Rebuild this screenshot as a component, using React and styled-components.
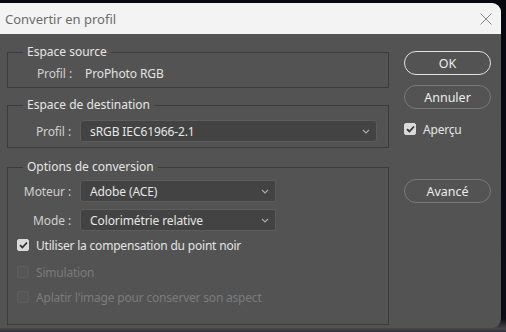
import React from "react";
import styled, { createGlobalStyle } from "styled-components";

const Global = createGlobalStyle`
  html, body { margin: 0; padding: 0; background: #0b0d13; }
  body { font-family: "Noto Sans", "Open Sans", sans-serif; font-size: 12px; }
  * { box-sizing: border-box; }
`;

const Page = styled.div`
  width: 506px;
  height: 332px;
  overflow: hidden;
  padding-top: 3px;
  background: linear-gradient(180deg, #07080d 0%, #0b0d14 96%, #4a4646 99%, #2a3040 100%);
`;

const Dialog = styled.div`
  width: 501px;
  height: 325px;
  border-radius: 0 9px 9px 0;
  overflow: hidden;
  background: #535353;
  display: flex;
  flex-direction: column;
`;

const TitleBar = styled.div`
  height: 31px;
  flex: none;
  background: #f3f3f3;
  display: flex;
  align-items: center;
  justify-content: space-between;
  padding: 0 9px 0 5px;
  color: #6c6c6c;
  font-size: 13px;
`;

const Body = styled.div`
  flex: 1;
  display: flex;
  padding: 10px 0 0 7px;
`;

const LeftCol = styled.div`
  width: 382px;
  display: flex;
  flex-direction: column;
`;

const Group = styled.fieldset`
  margin: ${p => p.$mt || 0}px 0 0 0;
  border: 1px solid #3b3b3b;
  padding: ${p => p.$pt}px 0 ${p => p.$pb}px 0;
  min-width: 0;
  display: flex;
  flex-direction: column;
  gap: ${p => p.$gap || 0}px;
`;

const Legend = styled.legend`
  margin-left: 15px;
  padding: 0 4px;
  line-height: 16px;
  font-size: 12px;
  color: #e6e6e6;
`;

const Row = styled.div`
  display: flex;
  align-items: center;
  height: ${p => p.$h || 22}px;
  letter-spacing: -0.1px;
`;

const Label = styled.span`
  width: ${p => p.$w}px;
  text-align: right;
  padding-right: 9px;
  color: #d0d0d0;
  flex: none;
`;

const Value = styled.span`
  color: #e2e2e2;
  padding-left: 4px;
`;

const Select = styled.div`
  width: ${p => p.$w}px;
  height: 22px;
  background: #434343;
  border: 1px solid #5c5c5c;
  border-radius: 3px;
  display: flex;
  align-items: center;
  justify-content: space-between;
  padding: 0 6px 0 9px;
  color: #e6e6e6;
`;

const Check = styled.span`
  width: 12px;
  height: 12px;
  border-radius: 2px;
  flex: none;
  display: flex;
  align-items: center;
  justify-content: center;
  background: ${p => (p.$on ? "#dadada" : p.$disabled ? "#565656" : "transparent")};
  border: 1px solid ${p => (p.$on ? "#dadada" : p.$disabled ? "#5e5e5e" : "#888")};
`;

const CheckRow = styled.label`
  display: flex;
  align-items: center;
  gap: 7px;
  height: ${p => p.$h || 16}px;
  margin-top: ${p => p.$mt || 0}px;
  padding-left: ${p => p.$pl || 0}px;
  letter-spacing: -0.2px;
  color: ${p => (p.$disabled ? "#7b7b7b" : "#e4e4e4")};
`;

const RightCol = styled.div`
  width: 87px;
  margin-left: 15px;
  display: flex;
  flex-direction: column;
  padding-top: 7px;
`;

const Button = styled.button`
  height: 24px;
  width: 87px;
  margin-top: ${p => p.$mt || 0}px;
  border-radius: 12px;
  background: transparent;
  border: ${p => (p.$primary ? "1.5px solid #e2e2e2" : "1px solid #7a7a7a")};
  color: #ececec;
  font-family: inherit;
  font-size: 12.5px;
  padding: 0;
`;

const Chevron = () => (
  <svg width="8" height="5" viewBox="0 0 8 5">
    <path d="M1 1 L4 4 L7 1" fill="none" stroke="#a9a9a9" strokeWidth="1.1" />
  </svg>
);

const Tick = () => (
  <svg width="9" height="8" viewBox="0 0 9 8">
    <path d="M1 4.2 L3.4 6.5 L8 1.5" fill="none" stroke="#333" strokeWidth="1.8" />
  </svg>
);

const Close = () => (
  <svg width="12" height="12" viewBox="0 0 12 12">
    <path d="M0.5 0.5 L11.5 11.5 M11.5 0.5 L0.5 11.5" stroke="#8a8a8a" strokeWidth="1" />
  </svg>
);

export default function App() {
  return (
    <>
      <Global />
      <Page>
        <Dialog>
          <TitleBar>
            <span>Convertir en profil</span>
            <Close />
          </TitleBar>
          <Body>
            <LeftCol>
              <Group $pt={5} $pb={6}>
                <Legend>Espace source</Legend>
                <Row $h={16}>
                  <Label $w={73}>Profil :</Label>
                  <Value>ProPhoto RGB</Value>
                </Row>
              </Group>
              <Group $mt={9} $pt={7} $pb={5}>
                <Legend>Espace de destination</Legend>
                <Row>
                  <Label $w={72}>Profil :</Label>
                  <Select $w={297}>
                    <span>sRGB IEC61966-2.1</span>
                    <Chevron />
                  </Select>
                </Row>
              </Group>
              <Group $mt={11} $pt={5} $pb={20} $gap={7}>
                <Legend>Options de conversion</Legend>
                <Row>
                  <Label $w={72}>Moteur :</Label>
                  <Select $w={196}>
                    <span>Adobe (ACE)</span>
                    <Chevron />
                  </Select>
                </Row>
                <Row>
                  <Label $w={72}>Mode :</Label>
                  <Select $w={196}>
                    <span>Colorimétrie relative</span>
                    <Chevron />
                  </Select>
                </Row>
                <CheckRow $pl={9} $h={14}>
                  <Check $on><Tick /></Check>
                  <span>Utiliser la compensation du point noir</span>
                </CheckRow>
                <CheckRow $pl={9} $h={14} $mt={6} $disabled>
                  <Check $disabled />
                  <span>Simulation</span>
                </CheckRow>
                <CheckRow $pl={9} $h={14} $mt={4} $disabled>
                  <Check $disabled />
                  <span>Aplatir l'image pour conserver son aspect</span>
                </CheckRow>
              </Group>
            </LeftCol>
            <RightCol>
              <Button $primary>OK</Button>
              <Button $mt={10}>Annuler</Button>
              <CheckRow $h={16} $mt={12}>
                <Check $on><Tick /></Check>
                <span>Aperçu</span>
              </CheckRow>
              <Button $mt={42}>Avancé</Button>
            </RightCol>
          </Body>
        </Dialog>
      </Page>
    </>
  );
}
